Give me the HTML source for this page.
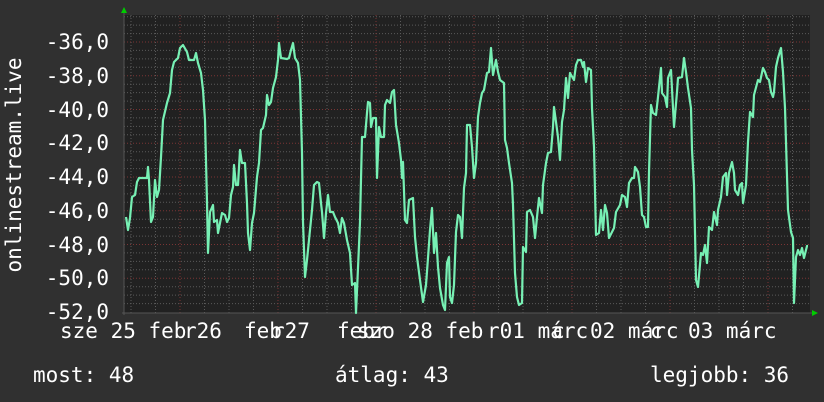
<!DOCTYPE html>
<html><head><meta charset="utf-8"><style>
html,body{margin:0;padding:0;background:#303030;}
svg{display:block}
text{font-family:"DejaVu Sans Mono","Liberation Mono",monospace;font-size:21px;fill:#ffffff}
</style></head><body>
<svg width="824" height="402" viewBox="0 0 824 402" xmlns="http://www.w3.org/2000/svg">
<rect width="824" height="402" fill="#303030"/>
<rect x="124" y="15" width="686" height="298" fill="#212121"/>
<g stroke="#5a5a5a" stroke-width="1" stroke-dasharray="1,2">
<line x1="124" x2="810" y1="16.7" y2="16.7"/><line x1="124" x2="810" y1="25.1" y2="25.1"/><line x1="124" x2="810" y1="33.6" y2="33.6"/>
<line x1="124" x2="810" y1="50.4" y2="50.4"/><line x1="124" x2="810" y1="58.9" y2="58.9"/><line x1="124" x2="810" y1="67.3" y2="67.3"/>
<line x1="124" x2="810" y1="84.2" y2="84.2"/><line x1="124" x2="810" y1="92.6" y2="92.6"/><line x1="124" x2="810" y1="101.1" y2="101.1"/>
<line x1="124" x2="810" y1="117.9" y2="117.9"/><line x1="124" x2="810" y1="126.4" y2="126.4"/><line x1="124" x2="810" y1="134.8" y2="134.8"/>
<line x1="124" x2="810" y1="151.7" y2="151.7"/><line x1="124" x2="810" y1="160.1" y2="160.1"/><line x1="124" x2="810" y1="168.6" y2="168.6"/>
<line x1="124" x2="810" y1="185.4" y2="185.4"/><line x1="124" x2="810" y1="193.9" y2="193.9"/><line x1="124" x2="810" y1="202.3" y2="202.3"/>
<line x1="124" x2="810" y1="219.2" y2="219.2"/><line x1="124" x2="810" y1="227.6" y2="227.6"/><line x1="124" x2="810" y1="236.1" y2="236.1"/>
<line x1="124" x2="810" y1="252.9" y2="252.9"/><line x1="124" x2="810" y1="261.4" y2="261.4"/><line x1="124" x2="810" y1="269.8" y2="269.8"/>
<line x1="124" x2="810" y1="286.7" y2="286.7"/><line x1="124" x2="810" y1="295.1" y2="295.1"/><line x1="124" x2="810" y1="303.6" y2="303.6"/>
<line x1="131" x2="131" y1="15" y2="313"/><line x1="155.5" x2="155.5" y1="15" y2="313"/>
<line x1="204.5" x2="204.5" y1="15" y2="313"/><line x1="229" x2="229" y1="15" y2="313"/><line x1="253.5" x2="253.5" y1="15" y2="313"/>
<line x1="302.5" x2="302.5" y1="15" y2="313"/><line x1="327" x2="327" y1="15" y2="313"/><line x1="351.5" x2="351.5" y1="15" y2="313"/>
<line x1="400.5" x2="400.5" y1="15" y2="313"/><line x1="425" x2="425" y1="15" y2="313"/><line x1="449.5" x2="449.5" y1="15" y2="313"/>
<line x1="498.5" x2="498.5" y1="15" y2="313"/><line x1="523" x2="523" y1="15" y2="313"/><line x1="547.5" x2="547.5" y1="15" y2="313"/>
<line x1="596.5" x2="596.5" y1="15" y2="313"/><line x1="621" x2="621" y1="15" y2="313"/><line x1="645.5" x2="645.5" y1="15" y2="313"/>
<line x1="694.5" x2="694.5" y1="15" y2="313"/><line x1="719" x2="719" y1="15" y2="313"/><line x1="743.5" x2="743.5" y1="15" y2="313"/>
<line x1="792.5" x2="792.5" y1="15" y2="313"/>
</g>
<g stroke="#7a3434" stroke-width="1" stroke-dasharray="1,2">
<line x1="124" x2="810" y1="42" y2="42"/><line x1="124" x2="810" y1="75.75" y2="75.75"/><line x1="124" x2="810" y1="109.5" y2="109.5"/>
<line x1="124" x2="810" y1="143.25" y2="143.25"/><line x1="124" x2="810" y1="177" y2="177"/><line x1="124" x2="810" y1="210.75" y2="210.75"/>
<line x1="124" x2="810" y1="244.5" y2="244.5"/><line x1="124" x2="810" y1="278.25" y2="278.25"/>
<line x1="180" x2="180" y1="15" y2="313"/><line x1="278" x2="278" y1="15" y2="313"/><line x1="376" x2="376" y1="15" y2="313"/>
<line x1="474" x2="474" y1="15" y2="313"/><line x1="572" x2="572" y1="15" y2="313"/><line x1="670" x2="670" y1="15" y2="313"/>
<line x1="768" x2="768" y1="15" y2="313"/>
</g>
<line x1="122" x2="814" y1="313" y2="313" stroke="#555" stroke-width="1"/>
<line x1="124" x2="124" y1="12" y2="315" stroke="#555" stroke-width="1"/>
<polygon points="121,13 127,13 124,7" fill="#00cc00"/>
<polygon points="812,310 812,316 818,313" fill="#00cc00"/>
<polyline fill="none" stroke="#77f0b4" stroke-width="2.2" stroke-linejoin="round" points="
126,217 128,230 130,218 132,197 135,195 137,182 139,178 147,178 148,167 149,180 151,222 153,217 155,180 157,197 159,190 161,157 163,120 167,103 170,93 172,70 174,62 178,58 180,48 183,45 187,52 189,60 194,60 196,53 198,63 201,73 203,90 205,120 207,202 208,253 210,212 213,205 214,222 217,220 218,233 222,213 225,215 227,222 229,218 231,195 233,187 234,165 236,185 238,185 240,150 242,163 245,163 247,203 248,233 250,250 252,223 254,213 257,177 259,163 261,130 263,128 266,115 267,95 269,105 271,102 273,88 276,77 278,60 279,43 281,58 287,59 289,58 291,50 293,43 295,58 298,63 300,80 302,153 303,222 305,277 307,260 310,230 312,210 314,185 317,182 319,183 321,203 322,212 324,238 326,213 328,195 330,212 333,212 335,217 338,223 340,233 342,218 344,223 347,240 350,253 352,285 355,283 356,313 358,268 360,222 362,137 365,137 367,113 368,102 370,103 371,127 373,118 376,118 377,178 379,127 381,137 384,137 385,105 387,100 390,103 392,92 394,90 396,125 399,143 401,160 402,178 403,162 405,220 407,223 409,200 413,198 415,237 417,257 420,280 423,302 426,285 428,258 430,230 432,208 434,253 436,233 438,267 440,288 443,305 445,310 447,263 449,257 450,297 452,303 454,285 456,232 458,215 460,217 462,238 464,188 466,173 467,125 470,125 472,147 474,178 476,163 478,117 480,103 482,93 484,90 487,73 489,72 491,48 493,75 496,60 498,72 500,80 504,83 505,140 507,148 509,163 512,183 513,205 515,273 517,297 519,305 522,303 523,247 526,252 527,212 530,210 533,217 535,238 537,217 539,198 542,213 543,185 546,163 548,153 551,152 553,127 554,107 556,122 558,137 560,160 562,122 564,110 566,78 568,98 570,73 574,80 576,65 578,60 581,60 583,67 584,62 586,82 588,68 591,70 592,108 594,147 596,235 599,233 601,210 603,230 605,205 607,213 609,238 612,232 614,228 616,212 620,205 622,195 625,197 627,207 629,183 632,178 634,178 635,167 638,172 640,187 642,215 644,217 646,227 648,227 649,172 651,105 653,113 656,115 658,97 661,68 662,93 665,97 667,107 668,78 671,70 673,108 674,127 677,92 678,78 682,77 684,58 686,72 688,88 691,108 692,150 694,185 696,280 698,287 701,253 703,255 705,245 707,263 709,227 712,230 714,212 717,225 718,210 721,197 723,177 726,173 727,195 729,173 732,162 734,173 735,190 738,195 740,185 742,183 743,203 746,185 748,142 750,112 753,117 754,95 758,80 760,82 763,68 765,72 767,78 769,80 771,92 773,97 774,92 776,67 778,58 781,48 783,72 785,108 788,210 791,232 793,238 794,303 796,257 798,250 800,255 802,248 804,258 807,246 808,246"/>
<g text-anchor="end">
<text x="109" y="49">-36,0</text><text x="109" y="83">-38,0</text><text x="109" y="117">-40,0</text>
<text x="109" y="150">-42,0</text><text x="109" y="184">-44,0</text><text x="109" y="218">-46,0</text>
<text x="109" y="252">-48,0</text><text x="109" y="285">-50,0</text><text x="109" y="319">-52,0</text>
</g>
<text transform="translate(21,165) rotate(-90)" text-anchor="middle">onlinestream.live</text>
<text x="60" y="338">sze 25 feb</text>
<text x="184" y="338">r26</text>
<text x="244" y="338">feb</text>
<text x="272" y="338">r27</text>
<text x="337" y="338">febr</text>
<text x="357" y="338">szo 28 feb</text>
<text x="487" y="338">r01 márc</text>
<text x="552" y="338">c</text>
<text x="590" y="338">02 márc</text>
<text x="650" y="338">c</text>
<text x="688" y="338">03 márc</text>
<text x="33" y="382">most: 48</text>
<text x="335" y="382">átlag: 43</text>
<text x="650" y="382">legjobb: 36</text>
</svg>
</body></html>
